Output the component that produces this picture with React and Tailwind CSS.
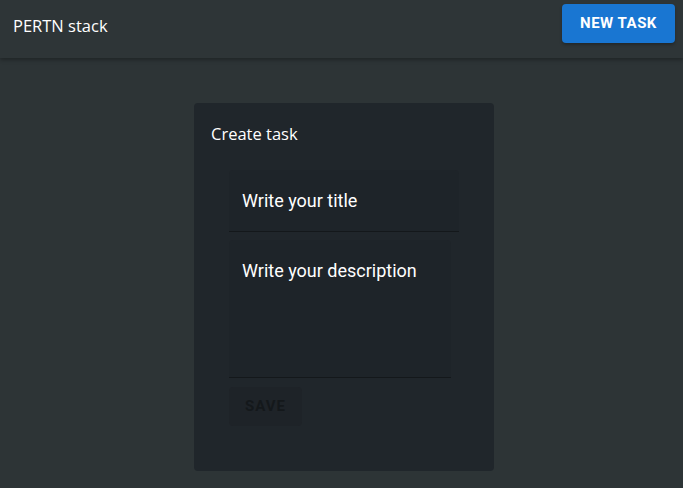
export default function App() {
  return (
    <div className="min-h-[488px] bg-[#2d3436]" style={{ fontFamily: 'Roboto, "Liberation Sans", sans-serif' }}>
      <header className="flex h-[58px] items-start justify-between bg-[#2e3537] shadow-[0_2px_4px_rgba(0,0,0,0.3)]">
        <div className="mt-[14px] pl-[13px] font-['Open_Sans',sans-serif] text-[16.5px] leading-[24px] text-white">
          PERTN stack
        </div>
        <button className="mr-[8px] mt-[4px] h-[39px] w-[113px] rounded-[4px] bg-[#1976d2] text-[15px] font-bold tracking-[0.5px] text-white shadow-[0_2px_3px_rgba(0,0,0,0.25)]">
          NEW TASK
        </button>
      </header>

      <main className="pl-[194px] pt-[45px]">
        <div className="h-[368px] w-[300px] rounded-[4px] bg-[#20262b] px-[17px] pt-[19px]">
          <h2 className="font-['Open_Sans',sans-serif] text-[16.5px] leading-[24px] text-white">Create task</h2>
          <div className="mt-[24px] pl-[18px]">
            <div className="flex h-[62px] w-[230px] items-center rounded-t-[4px] border-b border-[#14181b] bg-[#1e2429] pl-[13px] text-[18px] text-white">
              Write your title
            </div>
            <div className="mt-[8px] h-[138px] w-[222px] rounded-t-[4px] border-b border-[#14181b] bg-[#1e2429] pl-[13px] pt-[18px] text-[18px] leading-[26px] text-white">
              Write your description
            </div>
            <button className="mt-[9px] h-[39px] w-[73px] rounded-[4px] bg-[#1e2328] text-[15px] font-bold tracking-[1px] text-[#14181b]">
              SAVE
            </button>
          </div>
        </div>
      </main>
    </div>
  );
}
